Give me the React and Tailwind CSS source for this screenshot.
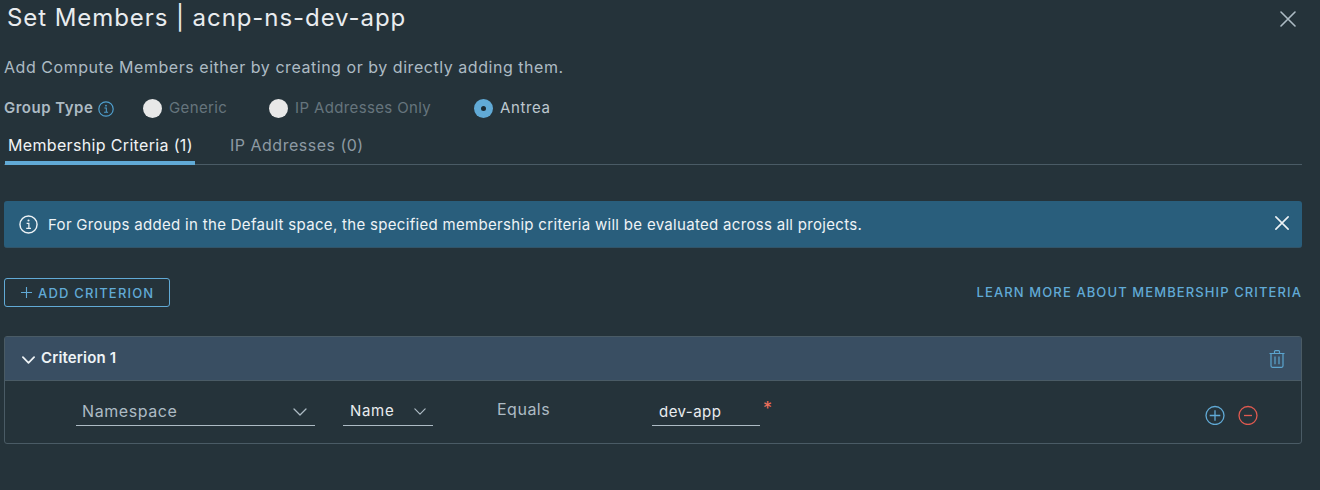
import React from "react";

function InfoIcon({ className }) {
  return (
    <svg viewBox="0 0 20 20" className={className} fill="none" stroke="currentColor">
      <circle cx="10" cy="10" r="9" strokeWidth="1.5" />
      <path d="M8 8.7h2.4v5.2M7.6 14.1h5" strokeWidth="1.3" />
      <circle cx="10" cy="5.8" r="1.1" fill="currentColor" stroke="none" />
    </svg>
  );
}

function CloseIcon({ className, width }) {
  return (
    <svg viewBox="0 0 16 16" className={className} fill="none" stroke="currentColor" strokeWidth={width} strokeLinecap="round">
      <path d="M1 1l14 14M15 1L1 15" />
    </svg>
  );
}

function Chevron({ className, width }) {
  return (
    <svg viewBox="0 0 14 8" className={className} fill="none" stroke="currentColor" strokeWidth={width} strokeLinecap="round" strokeLinejoin="round">
      <path d="M1 1l6 6 6-6" />
    </svg>
  );
}

function Radio({ label, checked, className }) {
  return (
    <label className={"flex items-center " + className}>
      <span className={"flex size-[19px] items-center justify-center rounded-full " + (checked ? "bg-[#61aad6]" : "bg-[#e8e8e8]")}>
        {checked && <span className="size-[5px] rounded-full bg-[#1b2a32]" />}
      </span>
      <span className={"ml-[7px] text-[15px] " + (checked ? "text-[#bdc8cf] tracking-[0.6px]" : "text-[#66757d] tracking-[0.37px]")}>{label}</span>
    </label>
  );
}

export default function App() {
  return (
    <main className="h-[490px] w-[1320px] overflow-hidden bg-[#25333a] font-['Inter',sans-serif] whitespace-nowrap text-[#adbbc4]">
      <header className="flex h-9 items-center justify-between pl-[7px] pr-[24px]">
        <h1 className="text-[24px] leading-9 tracking-[0.93px] text-[#e9ecef]">Set Members | acnp-ns-dev-app</h1>
        <CloseIcon className="mt-px size-[16px] text-[#adbbc4]" width="1.6" />
      </header>

      <div className="w-[1302px] pl-1">
        <p className="mt-[19px] h-6 text-[16px] leading-6 tracking-[0.54px]">Add Compute Members either by creating or by directly adding them.</p>

        <div className="mt-[17px] flex h-6 items-center">
          <span className="w-[94px] text-[15px] font-semibold tracking-[0.5px]">Group Type</span>
          <InfoIcon className="mt-[2px] size-[16px] text-[#4f9fce]" />
          <Radio label="Generic" className="ml-[29px] w-[126px]" />
          <Radio label="IP Addresses Only" className="w-[205px]" />
          <Radio label="Antrea" checked className="" />
        </div>

        <nav className="mt-2 flex h-[37px] border-b border-[#4a5b65] text-[16px] leading-[34px]">
          <span className="ml-px h-[37px] w-[190px] border-b-4 border-[#61aad6] pl-[3px] tracking-[0.34px] text-[#f1f3f5]">Membership Criteria (1)</span>
          <span className="ml-[35px] tracking-[0.5px] text-[#8d9aa3]">IP Addresses (0)</span>
        </nav>

        <section className="mt-9 flex h-[47px] items-center rounded-[3px] border-b border-[#325468] bg-[#295e7c] pl-[15px] pr-[13px] text-[#eef3f6]">
          <InfoIcon className="size-[19px]" />
          <p className="ml-[10px] mt-[2px] text-[15px] tracking-[0.31px]">For Groups added in the Default space, the specified membership criteria will be evaluated across all projects.</p>
          <CloseIcon className="mb-[3px] ml-auto size-[14px]" width="1.8" />
        </section>

        <div className="mt-[30px] flex h-[29px] items-center justify-between">
          <button className="flex h-[29px] w-[166px] items-center rounded-[3px] border border-[#61aad6] pl-4 text-[13px] font-medium tracking-[1.18px] text-[#61aad6]">
            <svg viewBox="0 0 11 11" className="mr-[6px] size-[11px]" stroke="currentColor" strokeWidth="1.1"><path d="M5.5 0v11M0 5.5h11" /></svg>
            <span className="mt-[2px]">ADD CRITERION</span>
          </button>
          <a className="text-[13px] font-medium tracking-[1.1px] text-[#61aad6]">LEARN MORE ABOUT MEMBERSHIP CRITERIA</a>
        </div>

        <section className="mt-[29px] h-[108px] rounded-[3px] border border-[#4a5b65]">
          <div className="flex h-[44px] items-center border-b border-[#4a5b65] bg-[#394e62] pl-[17px] pr-4">
            <Chevron className="mt-[2px] h-2 w-[13px] text-[#eef3f6]" width="1.9" />
            <h2 className="ml-[6px] text-[15px] font-semibold tracking-[0.15px] text-[#eef3f6]">Criterion 1</h2>
            <svg viewBox="0 0 16 18" className="ml-auto h-[18px] w-4 text-[#5ba4ce]" fill="none" stroke="currentColor" strokeWidth="1.2">
              <path d="M.5 3.5h15M2 3.5v12.3c0 .9.5 1.5 1.4 1.5h9.2c.9 0 1.4-.6 1.4-1.5V3.5M5.5 3.3V1.6q0-.9.9-.9h3.2q.9 0 .9.9v1.7M6 6.5v7.7M10 6.5v7.7" />
            </svg>
          </div>
          <div className="flex h-[62px] pl-[71px] pr-[43px]">
            <div className="mt-4 flex h-[29px] w-[239px] items-center justify-between border-b border-[#adbbc4] pl-[6px] pr-[8px] text-[16px] tracking-[0.58px]">
              Namespace
              <Chevron className="mt-[2px] h-2 w-[14px]" width="1.3" />
            </div>
            <div className="ml-[28px] mt-4 flex h-[29px] w-[90px] items-center justify-between border-b border-[#adbbc4] pl-[7px] pr-[7px] text-[15px] tracking-[0.7px] text-[#e9ecef]">
              Name
              <Chevron className="mt-px h-[7px] w-[12px] text-[#adbbc4]" width="1.4" />
            </div>
            <span className="ml-[64px] mt-4 w-[155px] text-[16px] leading-6 tracking-[0.5px]">Equals</span>
            <div className="mt-4 flex h-[29px] w-[108px] items-center border-b border-[#adbbc4] pl-[7px] pt-[2px] text-[15px] tracking-[0.45px] text-[#e9ecef]">dev-app</div>
            <span className="ml-[3px] mt-4 text-[18px] leading-6 text-[#f0705c]">*</span>
            <div className="ml-auto mt-6 flex gap-[13px]">
              <svg viewBox="0 0 20 20" className="size-5 text-[#61aad6]" fill="none" stroke="currentColor" strokeWidth="1.3"><circle cx="10" cy="10.5" r="9" /><path d="M10 5.2v10.6M4.7 10.5h10.6" /></svg>
              <svg viewBox="0 0 20 20" className="size-5 text-[#e05a50]" fill="none" stroke="currentColor" strokeWidth="1.3"><circle cx="10" cy="10.5" r="9" /><path d="M6 10.5h8" /></svg>
            </div>
          </div>
        </section>
      </div>
    </main>
  );
}
